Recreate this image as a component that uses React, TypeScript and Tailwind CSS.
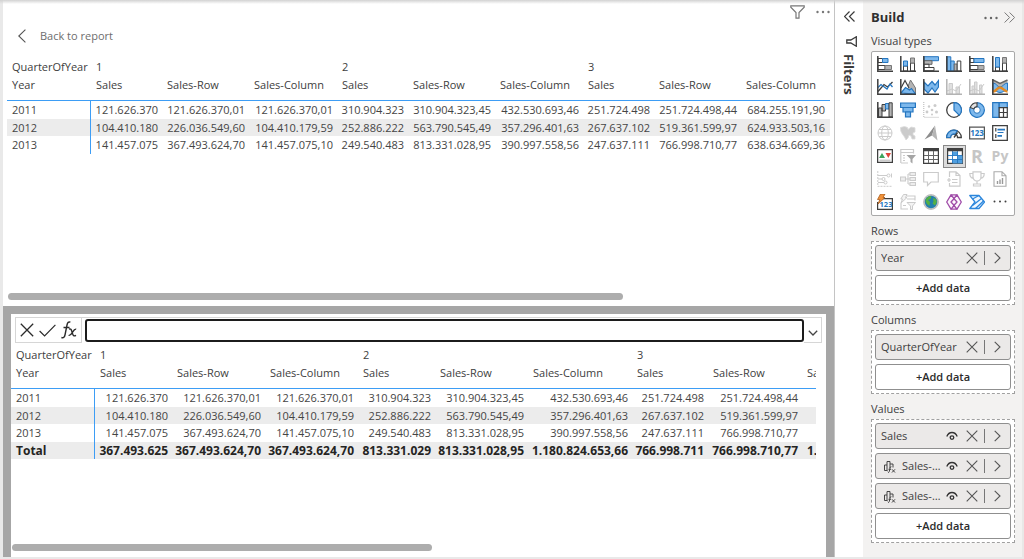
import React, { useState } from "react";

const INK = "#3f3f3f";
const GRAY = "#b4b4b4";
const PALE = "#cbcbcb";
const BLUE = "#2576c0";
const SKY = "#7db8ec";

function Icon({ children }: { children: React.ReactNode }) {
  return (
    <svg viewBox="0 0 16 16" className="h-4 w-4" fill="none" aria-hidden="true">
      {children}
    </svg>
  );
}

const axis = (color: string) => <path d="M.8 0V15.2H16" stroke={color} strokeWidth="1.5" />;

const visuals: { name: string; art: React.ReactNode }[] = [
  {
    name: "Stacked bar chart",
    art: (
      <>
        <path d="M1 2.500h4.500v4H1zM1 9.500h7v4H1z" fill="#fff" stroke={INK} />
        <path d="M5.500 2.500H11v4H5.500z" fill={SKY} stroke={BLUE} />
        <path d="M8 9.500h6.500v4H8z" fill={GRAY} stroke="#777" />
        {axis(INK)}
      </>
    ),
  },
  {
    name: "Stacked column chart",
    art: (
      <>
        <path d="M3.500 10h4v5h-4zM10.500 7h4v8h-4z" fill="#fff" stroke={INK} />
        <path d="M3.500 5h4v5h-4z" fill={SKY} stroke={BLUE} />
        <path d="M10.500 2h4v5h-4z" fill={GRAY} stroke="#777" />
        {axis(INK)}
      </>
    ),
  },
  {
    name: "Clustered bar chart",
    art: (
      <>
        <path d="M1 .7h14.500v4H1z" fill={SKY} stroke={BLUE} />
        <path d="M1 4.700h8v3.600H1z" fill={GRAY} stroke="#666" />
        <path d="M1 8.300h5v3.200H1zM1 11.500h10v3.200H1z" fill="#fff" stroke={INK} />
        {axis(INK)}
      </>
    ),
  },
  {
    name: "Clustered column chart",
    art: (
      <>
        <path d="M1 .8h3.800V15H1z" fill={SKY} stroke={BLUE} />
        <path d="M4.800 5h3.400v10H4.800z" fill={SKY} stroke={BLUE} />
        <path d="M8.200 8h3v7h-3z" fill={GRAY} stroke="#666" />
        <path d="M11.200 5h3.600v10h-3.600z" fill="#fff" stroke={INK} />
        {axis(INK)}
      </>
    ),
  },
  {
    name: "100% stacked bar chart",
    art: (
      <>
        <path d="M1 2.500h4v4H1zM1 9.500h8v4H1z" fill="#fff" stroke={INK} />
        <path d="M5 2.500h10v4H5z" fill={SKY} stroke={BLUE} />
        <path d="M9 9.500h6v4H9z" fill={GRAY} stroke="#777" />
        {axis(INK)}
      </>
    ),
  },
  {
    name: "100% stacked column chart",
    art: (
      <>
        <path d="M3.500 11h4v4h-4zM10.500 7h4v8h-4z" fill="#fff" stroke={INK} />
        <path d="M3.500 1.500h4V11h-4z" fill={SKY} stroke={BLUE} />
        <path d="M10.500 1.500h4V7h-4z" fill={GRAY} stroke="#777" />
        {axis(INK)}
      </>
    ),
  },
  {
    name: "Line chart",
    art: (
      <>
        <path d="M1 12.500l6-7 3.500 2.500L15.500 3" stroke={INK} strokeWidth="1.300" />
        <path d="M1 8.500l3-3 6 4.500 3-5 2.500 3" stroke={BLUE} strokeWidth="1.300" />
        {axis(INK)}
      </>
    ),
  },
  {
    name: "Area chart",
    art: (
      <>
        <path d="M5 15L10.500 1 15.500 9v6z" fill={GRAY} stroke="#777" />
        <path d="M1 9l4-7.500L9 9" stroke={INK} strokeWidth="1.200" fill="#fff" />
        <path d="M1 14l4.500-5.500 4 2.500 2-1.500 4 5.500z" fill={SKY} stroke={BLUE} strokeWidth="1.200" />
        {axis(INK)}
      </>
    ),
  },
  {
    name: "Stacked area chart",
    art: (
      <>
        <path d="M1 3l4 4 4-4.500 3 3.500 3.500-4.500V8l-3.500 5-3-4-4 5-4-4z" fill={SKY} stroke={BLUE} strokeWidth="1.200" />
        {axis(INK)}
      </>
    ),
  },
  {
    name: "Line and stacked column chart",
    art: (
      <>
        <path d="M3 4.500h3.500V15H3zM10 8h3.500v7H10z" fill="#e0e0e0" stroke={PALE} />
        <path d="M1 12l5-2 4 2 5-7" stroke={PALE} />
        {axis(GRAY)}
      </>
    ),
  },
  {
    name: "Line and clustered column chart",
    art: (
      <>
        <path d="M3 7h2.500v8H3zM5.500 3H8v12H5.500zM10.500 6H13v9h-2.500z" fill="#e0e0e0" stroke={PALE} />
        <path d="M1 12l5-2 4 2 5-7" stroke={PALE} />
        {axis(GRAY)}
      </>
    ),
  },
  {
    name: "Ribbon chart",
    art: (
      <>
        <path d="M1 1l7 3.500L15.500 1v10L8 8.500 1 11z" fill={GRAY} />
        <path d="M1 4c3.500 0 4 4 7 4s4-4 7.500-4v7.500c-3.500 0-4.500 2-7.500 2s-3.500-2-7-2z" fill={SKY} stroke={BLUE} />
        <path d="M1 1l7 3.500L15.500 1" stroke="#666" strokeWidth="1.400" />
        <path d="M1 12.500c3.500 0 4-4 7-4s4 4 7.500 4" stroke="#e38b25" strokeWidth="2.600" />
        {axis(INK)}
      </>
    ),
  },
  {
    name: "Waterfall chart",
    art: (
      <>
        <path d="M1.500 6h3.500v9H1.500zM5 2.500h3.500V9H5z" fill={GRAY} stroke={INK} />
        <path d="M8.500 1.500h3.500V7H8.500z" fill={SKY} stroke={BLUE} />
        <path d="M12 .8h3.200V15H12z" fill={GRAY} stroke={INK} />
        {axis(INK)}
      </>
    ),
  },
  {
    name: "Funnel chart",
    art: (
      <g fill={SKY} stroke={BLUE} strokeWidth="1.200">
        <path d="M.6 1h14.800v4.500H.6z" />
        <path d="M3 5.500h10V10H3z" />
        <path d="M5.500 10h5v4.800h-5z" />
      </g>
    ),
  },
  {
    name: "Scatter chart",
    art: (
      <>
        <g fill={PALE}>
          <circle cx="4" cy="10" r="1.400" />
          <circle cx="6" cy="4.500" r="1.200" />
          <circle cx="9" cy="8" r="1.300" />
          <circle cx="12" cy="3.500" r="1.500" />
          <circle cx="13.500" cy="10" r="1.500" />
          <circle cx="9" cy="12.500" r="1" />
        </g>
        <path d="M.8 0V15.3H16" stroke={GRAY} strokeDasharray="1 1" />
      </>
    ),
  },
  {
    name: "Pie chart",
    art: (
      <>
        <circle cx="8" cy="8" r="7.300" fill="#fff" stroke={INK} strokeWidth="1.300" />
        <path d="M8 .7a7.300 7.300 0 0 1 5.200 12.500L8 8z" fill={SKY} stroke={BLUE} strokeWidth="1.200" />
      </>
    ),
  },
  {
    name: "Donut chart",
    art: (
      <>
        <circle cx="8" cy="8" r="5.300" stroke={SKY} strokeWidth="4" />
        <path d="M8 .7a7.300 7.300 0 1 1-6.800 4.800" stroke={BLUE} strokeWidth="1.200" />
        <circle cx="8" cy="8" r="3.300" fill="#fff" stroke={BLUE} />
        <path d="M1.200 5.500A7.300 7.300 0 0 1 8 .7V4.600A3.400 3.400 0 0 0 4.800 6.900z" fill="#e3e3e3" stroke={INK} strokeWidth="1.100" />
      </>
    ),
  },
  {
    name: "Treemap",
    art: (
      <>
        <path d="M.7.7h6.500v14.600H.7z" fill={SKY} stroke={BLUE} strokeWidth="1.200" />
        <path d="M7.200.7h8.100v5H7.200z" fill={SKY} stroke={BLUE} strokeWidth="1.200" />
        <path d="M7.200 5.700h8.100v9.600H7.200zM11.500 5.700v9.600M7.200 10.500h8.100" fill="#fff" stroke={INK} strokeWidth="1.200" />
      </>
    ),
  },
  {
    name: "Map",
    art: (
      <g stroke={PALE}>
        <circle cx="8" cy="8" r="7" />
        <ellipse cx="8" cy="8" rx="3.300" ry="7" />
        <path d="M1 8h14M2 4.500h12M2 11.500h12" />
      </g>
    ),
  },
  {
    name: "Filled map",
    art: (
      <path
        fill={PALE}
        stroke="#dadada"
        strokeWidth=".8"
        d="M.5 2.500l4-1 3 1 .5 2L11 2l4 .8V7l-2 .8v2l2 1.200v3h-3l-1-3-2-1-1 3-2 2-1.500-3L2 8.500.8 6z"
      />
    ),
  },
  {
    name: "Azure map",
    art: (
      <>
        <path d="M12 .5L1.500 14.500 9 10.500z" fill="#8c8c8c" />
        <path d="M12 .5L9 10.500l5.500 5z" fill="#b5b5b5" />
      </>
    ),
  },
  {
    name: "Gauge",
    art: (
      <>
        <path d="M.7 12.500a7.300 7.300 0 0 1 14.600 0h-3.800a3.500 3.500 0 0 0-7 0z" fill="#fff" stroke={INK} strokeWidth="1.300" />
        <path d="M.7 12.500A7.300 7.300 0 0 1 11 5.800L9.500 9.300a3.500 3.500 0 0 0-5 3.200z" fill={SKY} stroke={BLUE} strokeWidth="1.200" />
        <path d="M8 12.500l3.500-5" stroke={INK} strokeWidth="1.400" />
      </>
    ),
  },
  {
    name: "Card",
    art: (
      <>
        <path d="M.6 2.100h14.800v11.800H.6z" stroke="#555" strokeWidth="1.300" />
        <text x="8" y="11" textAnchor="middle" fontFamily="Open Sans, sans-serif" fontSize="8" fill={BLUE}>
          123
        </text>
      </>
    ),
  },
  {
    name: "Multi-row card",
    art: (
      <>
        <path d="M.7.7h14.600v14.600H.7z" stroke={INK} strokeWidth="1.300" />
        <path d="M3.800 3v3.500M3.800 9v4" stroke={INK} strokeWidth="1.200" />
        <path d="M5.500 4.700h7.500M5.500 10.800H10" stroke={BLUE} strokeWidth="1.800" />
        <path d="M5.500 7.500h6" stroke={BLUE} />
      </>
    ),
  },
  {
    name: "KPI",
    art: (
      <>
        <path d="M.6 1.600h14.800v12.800H.6z" stroke={INK} strokeWidth="1.300" />
        <path d="M2 10l3-5 3 5z" fill="#3fa45c" />
        <path d="M8.500 5h5.500l-2.700 5z" fill="#e0453b" />
        <path d="M2.500 12.200h11" stroke={GRAY} />
      </>
    ),
  },
  {
    name: "Slicer",
    art: (
      <>
        <path d="M.8 15V1.500h12.700v4M1 4.500h12.500" stroke={PALE} strokeWidth="1.200" />
        <path d="M3 7.500h2M3 10h2M3 12.500h2M1 15h7" stroke={PALE} />
        <path d="M6.500 7h9.500l-3.500 4v4.500l-2-1.500v-3z" fill="#a5a5a5" />
      </>
    ),
  },
  {
    name: "Table",
    art: (
      <>
        <path d="M.6.6h14.800v14.800H.6z" fill="#fff" stroke={INK} strokeWidth="1.200" />
        <path d="M.6 2h14.800" stroke={INK} strokeWidth="2.500" />
        <path d="M5.500 3v12M10.500 3v12M1 7.500h14M1 11.500h14" stroke="#666" />
      </>
    ),
  },
  {
    name: "Matrix",
    art: (
      <>
        <path d="M.6.6h14.800v14.800H.6z" fill="#fff" stroke={INK} strokeWidth="1.200" />
        <path d="M5.500 3.500h5v4h-5zM10.500 7.500h5v8h-5zM5.500 11.500h5v4h-5z" fill="#4f9fe0" />
        <path d="M5.500 3v12M10.500 3v12M1 7.500h14M1 11.500h14" stroke={BLUE} strokeWidth=".9" />
        <path d="M.6 2h14.800" stroke={INK} strokeWidth="2.500" />
      </>
    ),
  },
  { name: "R script visual", art: null },
  { name: "Python visual", art: null },
  {
    name: "Key influencers",
    art: (
      <g stroke={PALE}>
        <path d="M.8 0V15.3H15" strokeDasharray="2 1" />
        <path d="M1 4.500h9M1 8h4M1 11.500h6" />
        <circle cx="11.500" cy="4.500" r="1.500" />
        <circle cx="6.500" cy="8" r="1.500" />
        <circle cx="8.500" cy="11.500" r="1.500" />
        <path d="M14.500 2.500v4" />
      </g>
    ),
  },
  {
    name: "Decomposition tree",
    art: (
      <g stroke={PALE} strokeWidth="1.100" fill="#ededed">
        <path d="M5.500 8H8M8 3v10M8 3h2M8 8h2M8 13h2" />
        <path d="M.5 6h5v4h-5zM10 1.500h5.500v3H10zM10 6.500h5.500v3H10zM10 11.500h5.500v3H10z" />
      </g>
    ),
  },
  {
    name: "Q&A",
    art: <path d="M.7 1.500h14.600v9.500H8L4.500 14.500V11H.7z" stroke={PALE} strokeWidth="1.200" />,
  },
  {
    name: "Smart narrative",
    art: (
      <g stroke={PALE} strokeWidth="1.200">
        <path d="M3.500 6V.8h6.500L14 4.500v10.700H3.500V12M10 .8v3.700h4M6 8.500h5.500M6 11.500h5.500" />
        <path d="M1 9h4M3 7v4" />
      </g>
    ),
  },
  {
    name: "Goals",
    art: (
      <path
        d="M4 .8h8V6a4 4 0 0 1-8 0zM4 2.500H.8c0 3 1 4.500 3.700 5M12 2.500h3.200c0 3-1 4.500-3.700 5M8 10v3M4.500 15v-2h7v2z"
        stroke={PALE}
        strokeWidth="1.200"
      />
    ),
  },
  {
    name: "Paginated report",
    art: (
      <>
        <path d="M2 .7h8l4 4v10.600H2zM10 .7v4h4" stroke="#aaa" strokeWidth="1.100" />
        <path d="M5.500 13v-3M8 13V8.500M10.500 13V7" stroke="#999" strokeWidth="1.400" />
      </>
    ),
  },
  {
    name: "Card (new)",
    art: (
      <>
        <path d="M6 4.600h9.400v10.800H.6V8" stroke={INK} strokeWidth="1.200" />
        <text x="9" y="13" textAnchor="middle" fontFamily="Open Sans, sans-serif" fontSize="7.500" fill={BLUE}>
          123
        </text>
        <path d="M3.500 0h4.500L6 3.500h2L1 10l1.800-4.500H.5z" fill="#f0923a" stroke="#a85a1b" strokeWidth=".8" />
      </>
    ),
  },
  {
    name: "Slicer (new)",
    art: (
      <>
        <path d="M7 2h8v4.500M7 5h8M1 9v6h7M3 11.500h3" stroke={PALE} strokeWidth="1.100" />
        <path d="M3.500.5H7L5.500 3.500H7L1 9l1.500-4H.8zM7 8.500h8.500l-3 3.500v3.500h-2V12z" fill="#f3f3f3" stroke={PALE} />
      </>
    ),
  },
  {
    name: "ArcGIS map",
    art: (
      <>
        <circle cx="8" cy="8" r="7.500" fill="#c4c4c4" stroke="#aaa" strokeWidth=".6" />
        <circle cx="8" cy="8" r="6.200" fill="#237fae" />
        <path d="M3.500 4l3-2 2 .5-1 2.500-2.500 1 2 2-.5 4-2.500-2-1.500-3zM10 4l3 1 .8 3-1.800 3.500L9.500 9.500l1-2z" fill="#54b043" />
      </>
    ),
  },
  {
    name: "Power Apps",
    art: (
      <g stroke="#a04ca8" strokeWidth="1.300" strokeLinejoin="round" fill="#fdf7fd">
        <path d="M4.500 1.500h3.500l3 3L8 8H4L1 5.500z" transform="translate(0 0)" stroke="none" />
        <path d="M5 .9h6L8 4.700zM5 15.100h6L8 11.300z" />
        <path d="M5 .9L8 4.700 5 8 8 11.300 5 15.100.7 8z" />
        <path d="M11 .9L8 4.700 11 8l-3 3.300 3 3.800L15.300 8z" />
      </g>
    ),
  },
  {
    name: "Power Automate",
    art: (
      <g stroke="#2b86dc" strokeWidth="1.300" strokeLinejoin="round">
        <path d="M.8 1.500H10L15.500 8 10 14.500H.8L6 8z" fill="#f0f8ff" />
        <path d="M3.500 5L10 1.500M3.500 11.500l9-7M6.500 14.500L14.500 7" />
      </g>
    ),
  },
  {
    name: "Get more visuals",
    art: (
      <g fill={INK}>
        <circle cx="2.500" cy="7.500" r="1" />
        <circle cx="8" cy="7.500" r="1" />
        <circle cx="13.500" cy="7.500" r="1" />
      </g>
    ),
  },
];

type Row = { label: string; cells: string[]; total?: boolean };

const baseRows: Row[] = [
  {
    label: "2011",
    cells: [
      "121.626.370", "121.626.370,01", "121.626.370,01",
      "310.904.323", "310.904.323,45", "432.530.693,46",
      "251.724.498", "251.724.498,44", "684.255.191,90",
    ],
  },
  {
    label: "2012",
    cells: [
      "104.410.180", "226.036.549,60", "104.410.179,59",
      "252.886.222", "563.790.545,49", "357.296.401,63",
      "267.637.102", "519.361.599,97", "624.933.503,16",
    ],
  },
  {
    label: "2013",
    cells: [
      "141.457.075", "367.493.624,70", "141.457.075,10",
      "249.540.483", "813.331.028,95", "390.997.558,56",
      "247.637.111", "766.998.710,77", "638.634.669,36",
    ],
  },
];

const totalRow: Row = {
  label: "Total",
  total: true,
  cells: [
    "367.493.625", "367.493.624,70", "367.493.624,70",
    "813.331.029", "813.331.028,95", "1.180.824.653,66",
    "766.998.711", "766.998.710,77", "1.947.823.364,43",
  ],
};

const measures = ["Sales", "Sales-Row", "Sales-Column"];

function Matrix({ rows, widths }: { rows: Row[]; widths: number[] }) {
  const total = widths.reduce((a, b) => a + b, 0);
  return (
    <div className="overflow-hidden">
      <table
        className="min-w-full table-fixed border-separate border-spacing-0 text-[11px] leading-4 whitespace-nowrap"
        style={{ width: total }}
      >
        <colgroup>
          {widths.map((w, i) => (
            <col key={i} style={{ width: w }} />
          ))}
          <col />
        </colgroup>
        <thead className="text-left text-[#404040]">
          <tr className="h-[18px]">
            <th scope="col" className="py-0 pl-[5px] font-normal">QuarterOfYear</th>
            {["1", "2", "3"].map((q) => (
              <th key={q} scope="colgroup" colSpan={3} className="py-0 pl-[5px] font-normal">{q}</th>
            ))}
            <td className="p-0" />
          </tr>
          <tr className="h-[25px] align-top">
            <th scope="col" className="border-b border-[#3d9df5] pt-px pb-0 pl-[5px] font-normal">Year</th>
            {[0, 1, 2].flatMap((q) =>
              measures.map((m) => (
                <th key={q + m} scope="col" className="border-b border-[#3d9df5] pt-px pb-0 pl-[5px] font-normal">{m}</th>
              )),
            )}
            <td className="border-b border-[#3d9df5] p-0" />
          </tr>
        </thead>
        <tbody className="text-[#454545]">
          {rows.map((r, i) => (
            <tr
              key={r.label}
              className={`${i % 2 ? "h-[17px] bg-[#ececec]" : "h-[18px]"} ${r.total ? "text-xs leading-4 font-bold text-[#252423]" : ""}`}
            >
              <th scope="row" className={`border-r border-[#3d9df5] py-0 pl-[5px] text-left ${r.total ? "font-bold" : "font-normal"}`}>
                {r.label}
              </th>
              {r.cells.map((c, j) => (
                <td key={j} className="py-0 pr-1 text-right">{c}</td>
              ))}
              <td className="p-0" />
            </tr>
          ))}
        </tbody>
      </table>
    </div>
  );
}

function Close({ className }: { className: string }) {
  return (
    <svg viewBox="0 0 12 12" className={className} fill="none" stroke="currentColor" strokeWidth="1.100" aria-hidden="true">
      <path d="M.7.7l10.600 10.600M11.300.7L.7 11.300" />
    </svg>
  );
}

function Eye() {
  return (
    <svg viewBox="0 0 12 10" className="h-[10px] w-3" fill="none" stroke="#333" strokeWidth="1.300" aria-hidden="true">
      <path d="M.8 5.500C2 2.500 4 1.500 6 1.500s4 1 5.200 4" />
      <circle cx="6" cy="6.600" r="1.800" />
    </svg>
  );
}

function VisualCalc() {
  return (
    <svg viewBox="0 0 13 13" className="h-[13px] w-[13px]" fill="none" stroke="#444" aria-hidden="true">
      <path d="M4 10.500H1.500V5H4M4.500 11H4V1.500h3V8M7 4h3v3.500" />
      <path d="M5 12.500c1 0 1.200-.5 1.400-1.500l.6-3c.2-1 .5-1.300 1.400-1.300M5.500 9.300H8M9 9.300l3 3.200M12 9.300l-3 3.200" />
    </svg>
  );
}

type FieldDef = { name: string; eye?: boolean; calc?: boolean };

function Field({ field }: { field: FieldDef }) {
  return (
    <div className="flex h-[26px] items-center rounded-[3px] border border-[#8f8f8f] bg-[#ebe9e8] pl-[5px] text-[11px] text-[#404040]">
      {field.calc && <span className="mr-[6px] ml-[2px] shrink-0"><VisualCalc /></span>}
      <span className="min-w-0 flex-1 truncate">{field.name}</span>
      {field.eye && (
        <button aria-label={`Toggle ${field.name}`} className="mr-2 shrink-0"><Eye /></button>
      )}
      <button aria-label={`Remove ${field.name}`} className="shrink-0 text-[#555]"><Close className="h-3 w-3" /></button>
      <span className="ml-[6px] h-[14px] w-px shrink-0 bg-[#777]" />
      <button aria-label={`Options for ${field.name}`} className="flex w-[25px] shrink-0 justify-center text-[#555]">
        <svg viewBox="0 0 7 12" className="h-3 w-[7px]" fill="none" stroke="currentColor" strokeWidth="1.100" aria-hidden="true">
          <path d="M.7.8L6 6 .7 11.200" />
        </svg>
      </button>
    </div>
  );
}

function Well({ title, fields }: { title: string; fields: FieldDef[] }) {
  return (
    <section>
      <h3 className="flex h-[25px] items-center pt-[5px] text-[11px] text-[#404040]">{title}</h3>
      <div className="flex flex-col gap-1 border border-dashed border-[#a0a0a0] bg-white p-[3px]">
        {fields.map((f, i) => (
          <Field key={i} field={f} />
        ))}
        <button className="h-[26px] rounded-[3px] border border-[#8f8f8f] bg-white text-[11px] font-semibold text-[#2b2b2b]">
          +Add data
        </button>
      </div>
    </section>
  );
}

function Dots({ className }: { className: string }) {
  return (
    <svg viewBox="0 0 14 4" className={className} fill="currentColor" aria-hidden="true">
      <circle cx="1.500" cy="2" r="1.200" />
      <circle cx="7" cy="2" r="1.200" />
      <circle cx="12.500" cy="2" r="1.200" />
    </svg>
  );
}

export default function App() {
  const [formula, setFormula] = useState("");
  return (
    <div className="relative flex min-h-screen flex-col bg-[#e9e9e9] pb-[2px] font-['Open_Sans','Noto_Sans',sans-serif]">
      <div className="pointer-events-none absolute inset-x-0 top-0 h-[4px] bg-linear-to-b from-[#d2d2d2] to-transparent" />
      <div className="flex flex-1">
        <main className="ml-[3px] grid min-w-0 flex-1 grid-rows-[306fr_251fr] border-r border-[#c4c4c4] bg-white">
          <section className="flex min-w-0 flex-col">
            <div className="flex h-6 items-center justify-end gap-[11px] pr-1 text-[#777]">
              <button aria-label="Filters on this visual">
                <svg viewBox="0 0 15 14" className="h-[14px] w-[15px]" fill="none" stroke="currentColor" aria-hidden="true">
                  <path d="M.8.800h13.400v1.400L9 7.500V13.200H6V7.500L.8 2.200z" strokeWidth="1.200" />
                </svg>
              </button>
              <button aria-label="More options"><Dots className="h-1 w-[14px]" /></button>
            </div>
            <a href="#report" className="flex h-6 items-center gap-[14px] self-start pl-[15px] text-[11px] text-[#6e6e6e]">
              <svg viewBox="0 0 8 14" className="h-[14px] w-2" fill="none" stroke="#555" strokeWidth="1.100" aria-hidden="true">
                <path d="M7.400.6L.8 7l6.600 6.400" />
              </svg>
              Back to report
            </a>
            <div className="mr-1 ml-1 pt-[10px]">
              <Matrix rows={baseRows} widths={[84, 71, 87, 88, 71, 87, 88, 71, 87, 88]} />
            </div>
            <div className="mt-auto mb-[6px] ml-[5px] h-[7px] w-[74%] rounded-full bg-[#adadad]" />
          </section>

          <section className="flex min-w-0 flex-col border-8 border-b-0 border-[#a6a6a6] bg-white">
            <div className="mx-1 mt-[3px] flex h-[26px] items-stretch border-t border-[#d6d6d6]">
              <div className="mr-[3px] flex w-[67px] items-center justify-between border border-t-0 border-[#d6d6d6] px-1 text-[#2b2b2b]">
                <button aria-label="Cancel"><Close className="h-[14px] w-[14px]" /></button>
                <button aria-label="Commit">
                  <svg viewBox="0 0 17 13" className="h-[13px] w-[17px]" fill="none" stroke="currentColor" strokeWidth="1.200" aria-hidden="true">
                    <path d="M.6 7l5 5L16.400.8" />
                  </svg>
                </button>
                <button aria-label="Functions">
                  <svg viewBox="0 0 16 18" className="h-[18px] w-4" fill="none" stroke="currentColor" strokeWidth="1.400" aria-hidden="true">
                    <path d="M.4 16.500c2.200.7 3.200-.4 3.700-3L6 4c.5-2.600 1.500-3.500 3.400-2.800M2.500 6.500h6M8 8.200c1.800-.8 2.300.2 2.900 2.400l.8 2.500c.6 1.900 1.500 2.200 3.300 1.200M15.200 8.200c-1.400-.4-2.300.8-3.600 3s-2.300 3.700-4 3.100" />
                  </svg>
                </button>
              </div>
              <input
                aria-label="Formula"
                value={formula}
                onChange={(e) => setFormula(e.target.value)}
                className="mt-px mb-px min-w-0 flex-1 rounded-[3px] border-2 border-[#1c1c1c] bg-white px-1 text-xs outline-none"
              />
              <button aria-label="Expand formula bar" className="flex w-[18px] items-center justify-center border border-t-0 border-l-0 border-[#d6d6d6] pt-[6px] text-[#444]">
                <svg viewBox="0 0 10 6" className="h-[6px] w-[10px]" fill="none" stroke="currentColor" strokeWidth="1.300" aria-hidden="true">
                  <path d="M.8.8L5 5 9.200.8" />
                </svg>
              </button>
            </div>
            <div className="mr-[10px] pt-[3px]">
              <Matrix rows={[...baseRows, totalRow]} widths={[84, 77, 93, 93, 77, 93, 104, 76, 94, 105]} />
            </div>
            <div className="mt-auto mb-[6px] ml-px h-[7px] w-[420px] max-w-full rounded-full bg-[#adadad]" />
          </section>
        </main>

        <aside className="flex w-[28px] flex-col items-center bg-white pt-[11px]">
          <button aria-label="Expand filters" className="text-[#3b3b3b]">
            <svg viewBox="0 0 11 11" className="h-[11px] w-[11px]" fill="none" stroke="currentColor" strokeWidth="1.200" aria-hidden="true">
              <path d="M5.500.5l-5 5 5 5M10.500.5l-5 5 5 5" />
            </svg>
          </button>
          <svg viewBox="0 0 11 11" className="mt-[14px] ml-1 h-[11px] w-[11px]" fill="none" stroke="#3b3b3b" strokeWidth="1.300" aria-hidden="true">
            <path d="M10.300.8v9.400L4.800 7H.8V4h4z" />
          </svg>
          <h2 className="mt-[7px] text-[13px] leading-4 font-bold text-[#3b3b3b] [writing-mode:vertical-rl]">Filters</h2>
        </aside>

        <aside className="w-[161px] border-r-2 border-[#e9e8e7] bg-[#f3f2f1] pr-[7px] pl-2">
          <header className="flex h-[34px] items-center pt-px">
            <h2 className="flex-1 text-[13px] font-bold text-[#2f2f2f]">Build</h2>
            <button aria-label="More build options" className="text-[#666]"><Dots className="h-1 w-[14px]" /></button>
            <button aria-label="Collapse build pane" className="ml-[6px] text-[#777]">
              <svg viewBox="0 0 11 11" className="h-[11px] w-[11px]" fill="none" stroke="currentColor" aria-hidden="true">
                <path d="M.6.500l5 5-5 5M5.600.500l5 5-5 5" />
              </svg>
            </button>
          </header>
          <h3 className="h-[17px] text-[11px] leading-[14px] text-[#404040]">Visual types</h3>
          <div className="grid grid-cols-6 rounded-[2px] border border-[#a9a9a9] bg-white px-[2px] py-px">
            {visuals.map((v) => (
              <button
                key={v.name}
                aria-label={v.name}
                className={`flex h-[23px] items-center justify-center font-bold text-[#c6c6c6] ${
                  v.name === "Matrix" ? "border border-[#888] bg-[#dcdcdc] pb-px" : "pr-px pb-px"
                }`}
              >
                {v.name === "R script visual" ? (
                  <span className="text-lg leading-none">R</span>
                ) : v.name === "Python visual" ? (
                  <span className="text-sm leading-none">Py</span>
                ) : (
                  <Icon>{v.art}</Icon>
                )}
              </button>
            ))}
          </div>
          <Well title="Rows" fields={[{ name: "Year" }]} />
          <Well title="Columns" fields={[{ name: "QuarterOfYear" }]} />
          <Well
            title="Values"
            fields={[
              { name: "Sales", eye: true },
              { name: "Sales-Row", eye: true, calc: true },
              { name: "Sales-Column", eye: true, calc: true },
            ]}
          />
        </aside>
      </div>
    </div>
  );
}
